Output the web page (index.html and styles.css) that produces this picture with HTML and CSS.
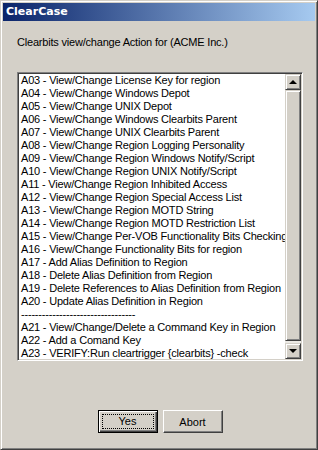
FILE: index.html
```html
<!DOCTYPE html>
<html lang="en">
<head>
    <meta charset="UTF-8">
    <title>ClearCase</title>
    <link rel="stylesheet" href="styles.css">
</head>
<body>
    <div class="window">
        <div class="titlebar">ClearCase</div>
        <div class="content">
            <p class="prompt">Clearbits view/change Action for (ACME Inc.)</p>
            <div class="listbox">
                <ul class="items">
                    <li>A03 - View/Change License Key for region</li>
                    <li>A04 - View/Change Windows Depot</li>
                    <li>A05 - View/Change UNIX Depot</li>
                    <li>A06 - View/Change Windows Clearbits Parent</li>
                    <li>A07 - View/Change UNIX Clearbits Parent</li>
                    <li>A08 - View/Change Region Logging Personality</li>
                    <li>A09 - View/Change Region Windows Notify/Script</li>
                    <li>A10 - View/Change Region UNIX Notify/Script</li>
                    <li>A11 - View/Change Region Inhibited Access</li>
                    <li>A12 - View/Change Region Special Access List</li>
                    <li>A13 - View/Change Region MOTD String</li>
                    <li>A14 - View/Change Region MOTD Restriction List</li>
                    <li>A15 - View/Change Per-VOB Functionality Bits Checking</li>
                    <li>A16 - View/Change Functionality Bits for region</li>
                    <li>A17 - Add Alias Definition to Region</li>
                    <li>A18 - Delete Alias Definition from Region</li>
                    <li>A19 - Delete References to Alias Definition from Region</li>
                    <li>A20 - Update Alias Definition in Region</li>
                    <li>---------------------------------</li>
                    <li>A21 - View/Change/Delete a Command Key in Region</li>
                    <li>A22 - Add a Comand Key</li>
                    <li>A23 - VERIFY:Run cleartrigger {clearbits} -check</li>
                </ul>
                <div class="scrollbar">
                    <div class="arrow up"><span class="tri"></span></div>
                    <div class="thumb"></div>
                    <div class="arrow down"><span class="tri"></span></div>
                </div>
            </div>
            <div class="buttons">
                <button class="btn default"><span class="focus">Yes</span></button>
                <button class="btn">Abort</button>
            </div>
        </div>
    </div>
</body>
</html>
```

FILE: styles.css
```css
body {
    margin: 0;
    background: #d4d0c8;
    font-family: "Liberation Sans", Arial, sans-serif;
    font-size: 11px;
    letter-spacing: -0.2px;
    color: #000;
}
.window {
    width: 318px;
    height: 450px;
    box-sizing: border-box;
    border: 1px solid;
    border-color: #d4d0c8 #404040 #404040 #d4d0c8;
    box-shadow: inset 1px 1px #fff, inset -1px -1px #808080;
    padding: 2px;
    background: #d4d0c8;
    display: flex;
    flex-direction: column;
}
.titlebar {
    height: 18px;
    line-height: 18px;
    padding-left: 3px;
    color: #fff;
    font-family: "DejaVu Sans", sans-serif;
    font-weight: bold;
    font-size: 11px;
    letter-spacing: 0;
    background: linear-gradient(to right, #0a246a, #a6caf0);
}
.content {
    padding: 0 12px 0 14px;
}
.prompt {
    margin: 15px 0 0 0;
    line-height: 13px;
}
.listbox {
    margin-top: 23px;
    height: 289px;
    box-sizing: border-box;
    border: 1px solid;
    border-color: #808080 #fff #fff #808080;
    box-shadow: inset 1px 1px #404040, inset -1px -1px #d4d0c8;
    padding: 1px;
    background: #fff;
    display: flex;
    overflow: hidden;
}
.items {
    list-style: none;
    margin: 0;
    padding: 0 0 0 2px;
    flex: 1;
    overflow: hidden;
    white-space: nowrap;
}
.items li {
    height: 13px;
    line-height: 13px;
}
.scrollbar {
    width: 16px;
    flex: none;
    display: flex;
    flex-direction: column;
    background: #ebe9e4;
}
.arrow, .thumb {
    box-sizing: border-box;
    background: #d4d0c8;
    border: 1px solid;
    border-color: #d4d0c8 #404040 #404040 #d4d0c8;
    box-shadow: inset 1px 1px #fff, inset -1px -1px #808080;
}
.arrow {
    height: 16px;
    display: flex;
    align-items: center;
    justify-content: center;
}
.thumb {
    flex: 1;
    margin-bottom: 2px;
}
.tri {
    width: 0;
    height: 0;
    border-left: 4px solid transparent;
    border-right: 4px solid transparent;
}
.up .tri {
    border-bottom: 4px solid #000;
}
.down .tri {
    border-top: 4px solid #000;
}
.buttons {
    margin: 49px 0 0 0;
    display: flex;
    justify-content: center;
    gap: 5px;
}
.btn {
    width: 60px;
    height: 23px;
    box-sizing: border-box;
    font-family: "Liberation Sans", Arial, sans-serif;
    font-size: 11px;
    color: #000;
    background: #d4d0c8;
    border: 1px solid;
    border-color: #fff #404040 #404040 #fff;
    box-shadow: inset -1px -1px #808080;
    padding: 0;
}
.btn.default {
    border: 1px solid #000;
    box-shadow: inset 1px 1px #fff, inset -1px -1px #404040, inset -2px -2px #808080;
    padding: 3px;
}
.focus {
    display: block;
    height: 100%;
    box-sizing: border-box;
    border: 1px dotted #000;
    line-height: 13px;
}
```
